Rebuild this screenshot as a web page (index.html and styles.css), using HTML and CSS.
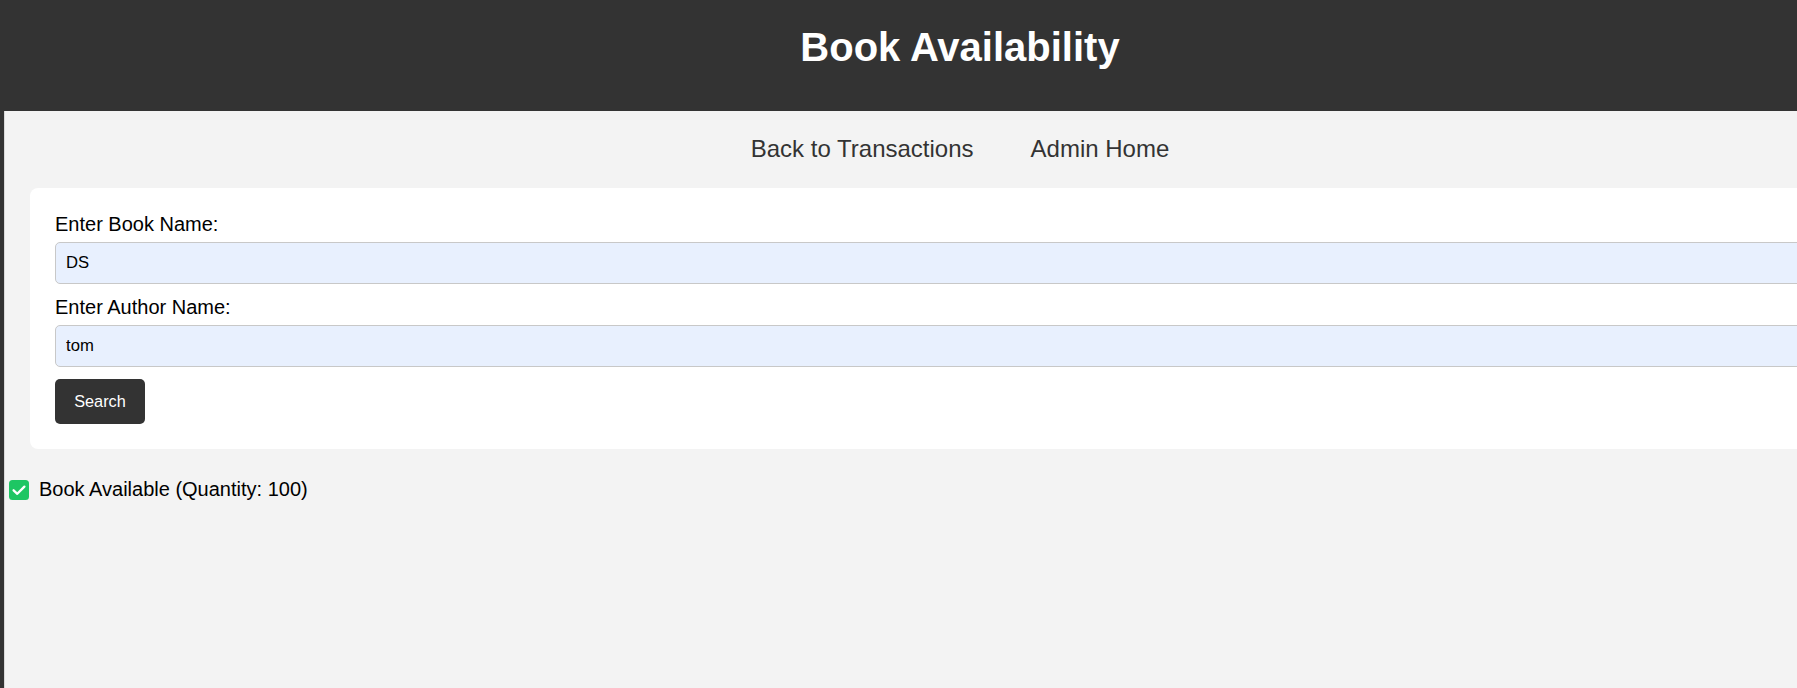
FILE: index.html
```html
<!DOCTYPE html>
<html lang="en">
<head>
<meta charset="utf-8">
<title>Book Availability</title>
<link rel="stylesheet" href="styles.css">
</head>
<body>
<div class="page">
  <header class="topbar">
    <h1 class="title">Book Availability</h1>
  </header>
  <main class="main">
    <nav class="nav">
      <a class="nav-link" href="#">Back to Transactions</a>
      <a class="nav-link" href="#">Admin Home</a>
    </nav>
    <form class="card">
      <label class="field-label" for="book">Enter Book Name:</label>
      <input class="field-input" id="book" type="text" value="DS">
      <label class="field-label" for="author">Enter Author Name:</label>
      <input class="field-input" id="author" type="text" value="tom">
      <button class="btn" type="button">Search</button>
    </form>
    <p class="result">
      <svg class="check" width="20" height="20" viewBox="0 0 20 20" aria-hidden="true">
        <rect x="0" y="0" width="20" height="20" rx="3.5" fill="#1ec663"/>
        <path d="M4.6 10.3 L8.3 13.8 L15.4 6.6" fill="none" stroke="#fff" stroke-width="2.3" stroke-linecap="round" stroke-linejoin="round"/>
      </svg>
      <span>Book Available (Quantity: 100)</span>
    </p>
  </main>
</div>
</body>
</html>
```
FILE: styles.css
```css
html, body {
  margin: 0;
  padding: 0;
}

body {
  background: #f3f3f3;
  font-family: "Liberation Sans", Arial, sans-serif;
  overflow: hidden;
  height: 688px;
}

.page {
  width: 1920px;
  display: flex;
  flex-direction: column;
  min-height: 688px;
}

.topbar {
  background: #333333;
  height: 111px;
  box-sizing: border-box;
  padding-top: 25px;
}

.title {
  margin: 0;
  color: #ffffff;
  font-size: 40px;
  font-weight: bold;
  line-height: 45px;
  text-align: center;
}

.main {
  flex: 1;
  width: 1916px;
  box-sizing: border-box;
  border-left: 4px solid #333333;
  box-shadow: inset 1px 0 0 #d9d9d9;
  background: #f3f3f3;
  padding-top: 24px;
}

.nav {
  display: flex;
  justify-content: center;
  gap: 57px;
  font-size: 24px;
  line-height: 28px;
}

.nav-link {
  color: #333333;
  text-decoration: none;
}

.card {
  margin: 25px 0 0 26px;
  background: #ffffff;
  border-radius: 8px;
  padding: 25px 25px 25px;
  display: flex;
  flex-direction: column;
  align-items: flex-start;
}

.field-label {
  font-size: 20px;
  line-height: 23px;
  color: #000000;
  margin-bottom: 6px;
}

.field-input {
  align-self: stretch;
  box-sizing: border-box;
  height: 42px;
  margin: 0 0 12px;
  padding: 0 10px;
  border: 1px solid #c8c8c8;
  border-radius: 5px;
  background: #e8f0fe;
  font-family: "Liberation Sans", Arial, sans-serif;
  font-size: 16.67px;
  color: #000000;
  outline: none;
}

.btn {
  height: 45px;
  width: 90px;
  padding: 0;
  border: none;
  border-radius: 5px;
  background: #333333;
  color: #ffffff;
  font-family: "Liberation Sans", Arial, sans-serif;
  font-size: 16.3px;
  cursor: pointer;
}

.result {
  display: flex;
  align-items: center;
  gap: 10px;
  margin: 29px 0 0;
  padding-left: 5px;
  font-size: 20px;
  line-height: 23px;
  color: #000000;
}

.check {
  display: block;
  flex: none;
}
```
